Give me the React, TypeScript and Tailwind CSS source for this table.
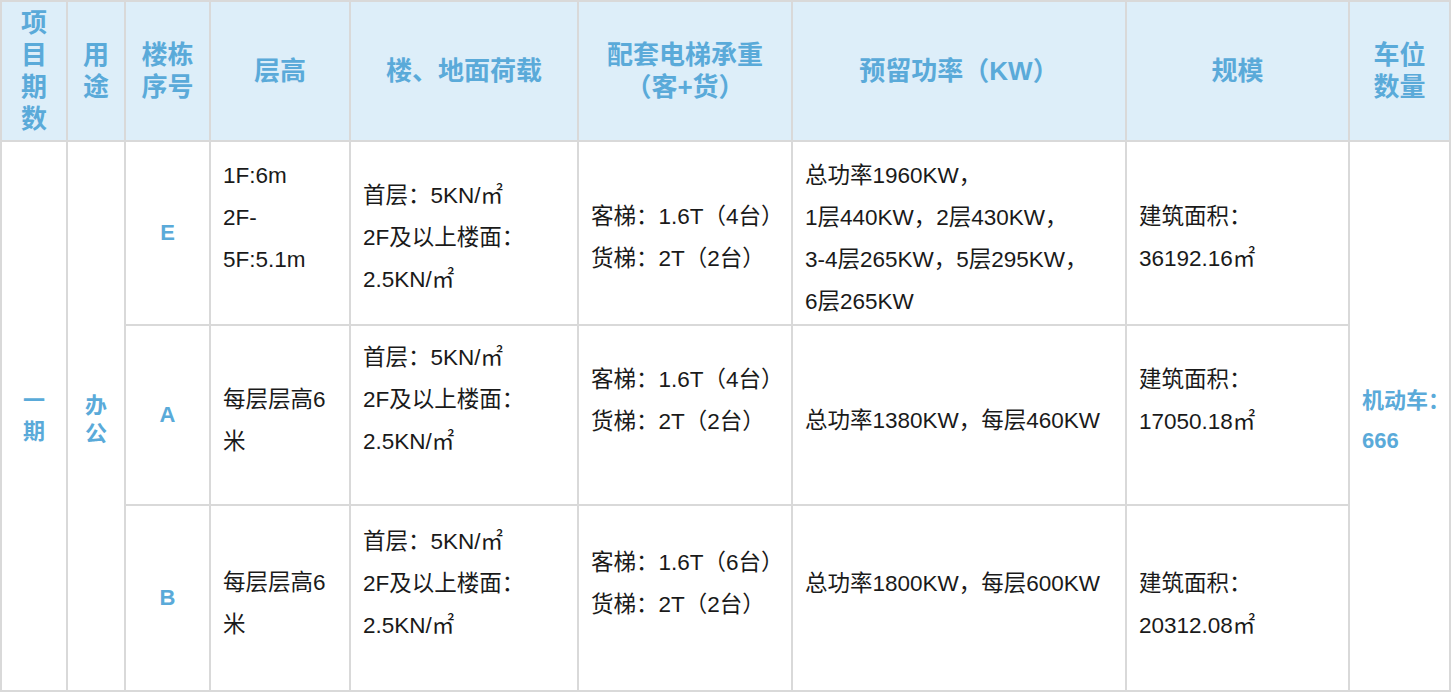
import React from "react";

type Cell = { lines: string[]; pt: number };
type Row = { id: string; h: number; cells: Cell[] };

const rows: Row[] = [
  {
    id: "E",
    h: 184,
    cells: [
      { lines: ["1F:6m", "2F-", "5F:5.1m"], pt: 13 },
      { lines: ["首层：5KN/㎡", "2F及以上楼面：", "2.5KN/㎡"], pt: 33 },
      { lines: ["客梯：1.6T（4台）", "货梯：2T（2台）"], pt: 54 },
      {
        lines: ["总功率1960KW，", "1层440KW，2层430KW，", "3-4层265KW，5层295KW，", "6层265KW"],
        pt: 13,
      },
      { lines: ["建筑面积：", "36192.16㎡"], pt: 54 },
    ],
  },
  {
    id: "A",
    h: 180,
    cells: [
      { lines: ["每层层高6", "米"], pt: 53 },
      { lines: ["首层：5KN/㎡", "2F及以上楼面：", "2.5KN/㎡"], pt: 11 },
      { lines: ["客梯：1.6T（4台）", "货梯：2T（2台）"], pt: 33 },
      { lines: ["总功率1380KW，每层460KW"], pt: 74 },
      { lines: ["建筑面积：", "17050.18㎡"], pt: 33 },
    ],
  },
  {
    id: "B",
    h: 186,
    cells: [
      { lines: ["每层层高6", "米"], pt: 56 },
      { lines: ["首层：5KN/㎡", "2F及以上楼面：", "2.5KN/㎡"], pt: 15 },
      { lines: ["客梯：1.6T（6台）", "货梯：2T（2台）"], pt: 36 },
      { lines: ["总功率1800KW，每层600KW"], pt: 57 },
      { lines: ["建筑面积：", "20312.08㎡"], pt: 57 },
    ],
  },
];

const cellBorder = "border-2 border-[#d9d9d9]";
const blue = "text-[#5aaad9]";

function Lines({ lines }: { lines: string[] }) {
  return (
    <>
      {lines.map((l, i) => (
        <div key={i} className="whitespace-nowrap">
          {l}
        </div>
      ))}
    </>
  );
}

export default function App() {
  const headers: { lines: string[]; w: number }[] = [
    { lines: ["项", "目", "期", "数"], w: 66 },
    { lines: ["用", "途"], w: 58 },
    { lines: ["楼栋", "序号"], w: 85 },
    { lines: ["层高"], w: 140 },
    { lines: ["楼、地面荷载"], w: 228 },
    { lines: ["配套电梯承重", "（客+货）"], w: 214 },
    { lines: ["预留功率（KW）"], w: 334 },
    { lines: ["规模"], w: 223 },
    { lines: ["车位", "数量"], w: 101 },
  ];

  return (
    <div className="w-[1455px] h-[693px] bg-white font-['Liberation_Sans','Noto_Sans_CJK_SC',sans-serif]">
      <table className="w-[1449px] table-fixed border-collapse border-2 border-[#d9d9d9]">
        <colgroup>
          {headers.map((h, i) => (
            <col key={i} style={{ width: h.w }} />
          ))}
        </colgroup>
        <thead>
          <tr className="h-[140px] bg-[#ddeef9]">
            {headers.map((h, i) => (
              <th
                key={i}
                className={`${cellBorder} ${blue} p-0 text-center align-middle text-[26px] font-bold leading-[32px]`}
              >
                <Lines lines={h.lines} />
              </th>
            ))}
          </tr>
        </thead>
        <tbody className="text-[22.5px] leading-[42px] text-[#1a1a1a]">
          {rows.map((r, ri) => (
            <tr key={r.id} style={{ height: r.h }}>
              {ri === 0 && (
                <>
                  <td
                    rowSpan={3}
                    className={`${cellBorder} ${blue} p-0 text-center align-middle text-[22px] font-bold leading-[31px]`}
                  >
                    <div>一</div>
                    <div>期</div>
                  </td>
                  <td
                    rowSpan={3}
                    className={`${cellBorder} ${blue} p-0 pt-[8px] text-center align-middle text-[22px] font-bold leading-[28px]`}
                  >
                    <div>办</div>
                    <div>公</div>
                  </td>
                </>
              )}
              <td className={`${cellBorder} ${blue} p-0 text-center align-middle text-[22px] font-bold`}>
                {r.id}
              </td>
              {r.cells.map((c, ci) => (
                <td key={ci} className={`${cellBorder} px-0 pb-0 pl-[12px] align-top`} style={{ paddingTop: c.pt }}>
                  <Lines lines={c.lines} />
                </td>
              ))}
              {ri === 0 && (
                <td
                  rowSpan={3}
                  className={`${cellBorder} ${blue} p-0 pt-[10px] pl-[12px] align-middle text-[22px] font-bold leading-[40px]`}
                >
                  <div className="whitespace-nowrap">机动车：</div>
                  <div>666</div>
                </td>
              )}
            </tr>
          ))}
        </tbody>
      </table>
    </div>
  );
}
